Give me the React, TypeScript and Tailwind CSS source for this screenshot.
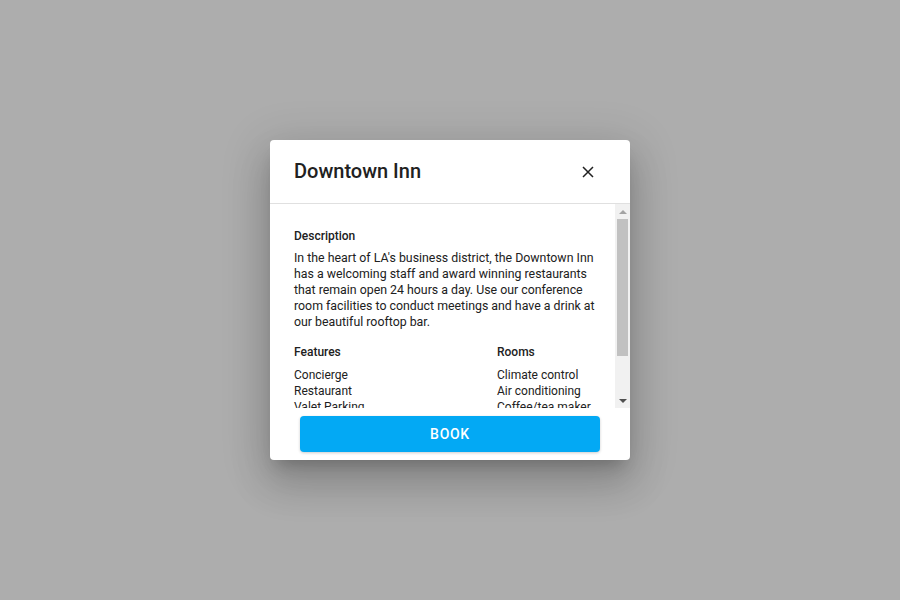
import React from "react";

export default function App() {
  const features = ["Concierge", "Restaurant", "Valet Parking", "Fitness center", "Pool", "Free WiFi"];
  const rooms = ["Climate control", "Air conditioning", "Coffee/tea maker", "Mini bar", "Safe", "Cable TV"];
  return (
    <div
      className="w-[900px] h-[600px] bg-[#adadad] flex items-center justify-center"
      style={{ fontFamily: "Roboto, 'Noto Sans', sans-serif" }}
    >
      <div className="w-[360px] h-[320px] bg-white rounded-[4px] flex flex-col overflow-hidden shadow-[0_11px_15px_-7px_rgba(0,0,0,0.2),0_24px_38px_3px_rgba(0,0,0,0.14),0_9px_46px_8px_rgba(0,0,0,0.12)]">
        <div className="h-[64px] shrink-0 flex items-center justify-between pl-[24px] pr-[36px] border-b border-[#e0e0e0]">
          <div className="text-[20px] font-medium text-[#212121] leading-[24px] -mt-[1px]">Downtown Inn</div>
          <svg width="12" height="12" viewBox="0 0 12 12" className="text-[#212121]">
            <path d="M1 1L11 11M11 1L1 11" stroke="currentColor" strokeWidth="1.5" />
          </svg>
        </div>
        <div className="h-[204px] shrink-0 flex">
          <div className="flex-1 overflow-hidden pl-[24px] pr-[2px] pt-[24px] text-[12px] leading-[16px] text-[#212121]">
            <div className="font-medium">Description</div>
            <p className="mt-[6px] text-[12.35px] pr-[4px]">
              In the heart of LA's business district, the Downtown Inn has a welcoming staff and award winning restaurants
              that remain open 24 hours a day. Use our conference room facilities to conduct meetings and have a drink at
              our beautiful rooftop bar.
            </p>
            <div className="mt-[14px] grid grid-cols-[203px_1fr]">
              <div>
                <div className="font-medium">Features</div>
                <div className="mt-[7px]">
                  {features.map((f) => (
                    <div key={f}>{f}</div>
                  ))}
                </div>
              </div>
              <div>
                <div className="font-medium">Rooms</div>
                <div className="mt-[7px]">
                  {rooms.map((r) => (
                    <div key={r} className="whitespace-nowrap">{r}</div>
                  ))}
                </div>
              </div>
            </div>
          </div>
          <div className="w-[15px] shrink-0 bg-[#f1f1f1] flex flex-col items-center">
            <div className="h-[15px] w-full flex items-center justify-center">
              <div className="w-0 h-0 border-l-[4px] border-r-[4px] border-b-[4px] border-l-transparent border-r-transparent border-b-[#a3a3a3]" />
            </div>
            <div className="w-[11px] h-[137px] bg-[#c1c1c1]" />
            <div className="flex-1" />
            <div className="h-[15px] w-full flex items-center justify-center">
              <div className="w-0 h-0 border-l-[4px] border-r-[4px] border-t-[4px] border-l-transparent border-r-transparent border-t-[#505050]" />
            </div>
          </div>
        </div>
        <div className="flex-1 px-[30px] pt-[8px]">
          <button className="w-full h-[36px] rounded-[4px] bg-[#03a9f4] text-white text-[14px] font-medium tracking-[0.05em] shadow-[0_1px_3px_rgba(0,0,0,0.2)]">
            BOOK
          </button>
        </div>
      </div>
    </div>
  );
}
